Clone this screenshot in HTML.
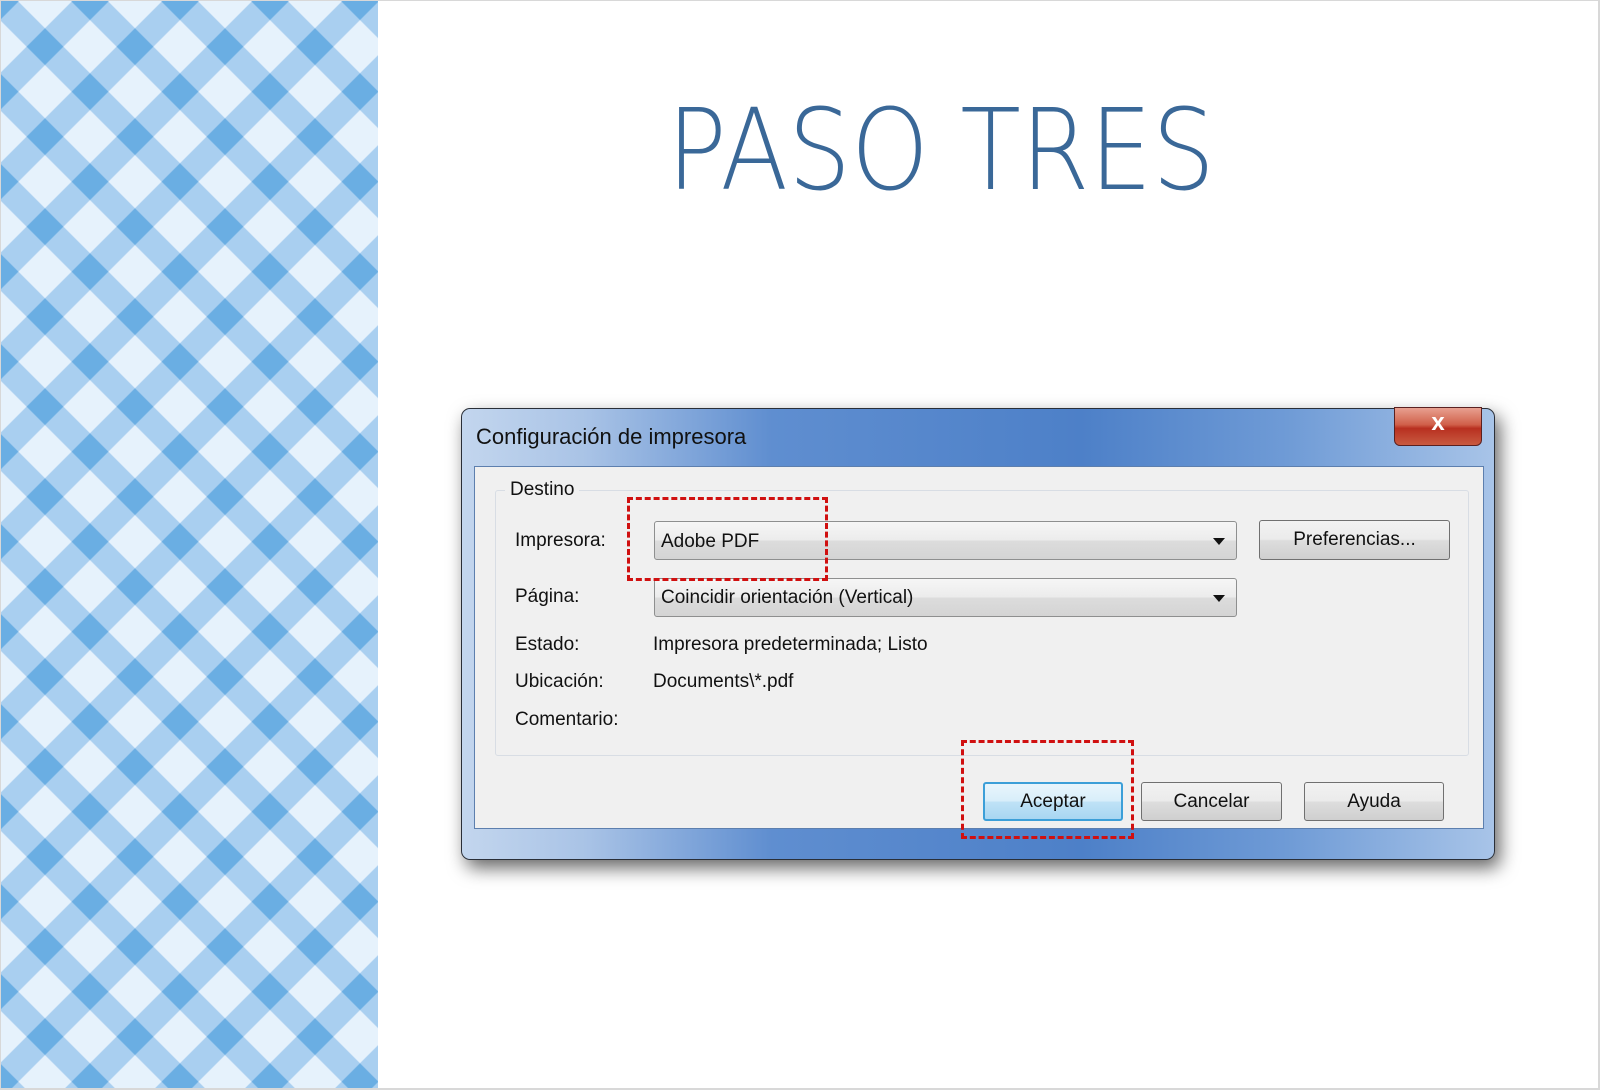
<!DOCTYPE html>
<html><head><meta charset="utf-8"><style>
*{margin:0;padding:0;box-sizing:border-box}
body{width:1600px;height:1090px;overflow:hidden;background:#fff;position:relative;font-family:"Liberation Sans",sans-serif}
.abs{position:absolute}
.frame{left:0;top:0;width:1600px;height:1090px;border:1px solid #d8d8d8;border-right:2px solid #d8d8d8;border-bottom:2px solid #d8d8d8}
.dlg{left:461px;top:408px;width:1034px;height:452px;border:1px solid #2a2f38;border-radius:9px;
background:linear-gradient(90deg,#c3d6ee 0%,#a9c3e6 12%,#5f8ed0 30%,#4d80c8 60%,#6f9bd6 80%,#a8c4e8 100%);
box-shadow:5px 8px 18px rgba(0,0,0,.6)}
.content{left:474px;top:466px;width:1010px;height:363px;background:#f0f0f0;border:1px solid #5d7fae}
.t{font-size:19px;color:#111;position:absolute;white-space:nowrap}
.combo{position:absolute;border:1px solid #8e8f8f;border-radius:3px;background:linear-gradient(#f6f6f6 0%,#ececec 48%,#dcdcdc 52%,#d4d4d4 100%)}
.btn{position:absolute;border:1px solid #707070;border-radius:3px;background:linear-gradient(#f2f2f2 0%,#ebebeb 48%,#dddddd 52%,#cfcfcf 100%);text-align:center;font-size:19px;color:#111;line-height:37px}
.arrow{position:absolute;width:0;height:0;border-left:6px solid transparent;border-right:6px solid transparent;border-top:7px solid #111}
.dash{position:absolute;border:3px dashed #d01010}
</style></head><body>
<svg class="abs" style="left:0;top:0" width="378" height="1090">
<defs><pattern id="p" width="63.64" height="63.64" patternUnits="userSpaceOnUse" patternTransform="translate(45 0) rotate(45)">
<rect width="63.64" height="63.64" fill="#e6f2fc"/>
<rect x="20" y="0" width="26" height="63.64" fill="#a9cff0"/>
<rect x="0" y="20" width="63.64" height="26" fill="#a9cff0"/>
<rect x="20" y="20" width="26" height="26" fill="#6aaee3"/>
</pattern></defs>
<rect width="378" height="1090" fill="url(#p)"/>
</svg>
<div class="abs frame"></div>
<svg class="abs" style="left:0;top:0" width="1600" height="220">
<text x="667" y="189" font-family="DejaVu Sans, Liberation Sans, sans-serif" font-weight="200" font-size="112" fill="#3a6898" textLength="548" lengthAdjust="spacingAndGlyphs">PASO  TRES</text>
</svg>
<div class="abs dlg"></div>
<div class="t" style="left:476px;top:424px;font-size:22px;color:#111">Configuración de impresora</div>
<div class="abs" style="left:1394px;top:407px;width:88px;height:39px;border:1px solid #5a2020;border-radius:0 0 6px 6px;background:linear-gradient(#e8a090 0%,#d0604a 45%,#b83020 55%,#c85a40 100%);color:#fff;font-weight:bold;font-size:24px;text-align:center;line-height:30px">x</div>
<div class="abs content"></div>
<div class="abs" style="left:495px;top:490px;width:974px;height:266px;border:1px solid #d8dde4;border-radius:3px"></div>
<div class="t" style="left:505px;top:479px;background:#f0f0f0;padding:0 5px">Destino</div>
<div class="t" style="left:515px;top:530px">Impresora:</div>
<div class="t" style="left:515px;top:586px">Página:</div>
<div class="t" style="left:515px;top:634px">Estado:</div>
<div class="t" style="left:515px;top:671px">Ubicación:</div>
<div class="t" style="left:515px;top:709px">Comentario:</div>
<div class="t" style="left:653px;top:634px">Impresora predeterminada; Listo</div>
<div class="t" style="left:653px;top:671px">Documents\*.pdf</div>
<div class="combo" style="left:654px;top:521px;width:583px;height:39px"></div>
<div class="t" style="left:661px;top:531px">Adobe PDF</div>
<div class="arrow" style="left:1213px;top:538px"></div>
<div class="combo" style="left:654px;top:578px;width:583px;height:39px"></div>
<div class="t" style="left:661px;top:587px">Coincidir orientación (Vertical)</div>
<div class="arrow" style="left:1213px;top:595px"></div>
<div class="btn" style="left:1259px;top:520px;width:191px;height:40px">Preferencias...</div>
<div class="btn" style="left:983px;top:782px;width:140px;height:39px;border:2px solid #3c9fd8;background:linear-gradient(#e8f5fc 0%,#d8eefa 48%,#bfe2f6 52%,#a8d6f2 100%);line-height:35px">Aceptar</div>
<div class="btn" style="left:1141px;top:782px;width:141px;height:39px">Cancelar</div>
<div class="btn" style="left:1304px;top:782px;width:140px;height:39px">Ayuda</div>
<div class="dash" style="left:627px;top:497px;width:201px;height:84px"></div>
<div class="dash" style="left:961px;top:740px;width:173px;height:99px"></div>
</body></html>
